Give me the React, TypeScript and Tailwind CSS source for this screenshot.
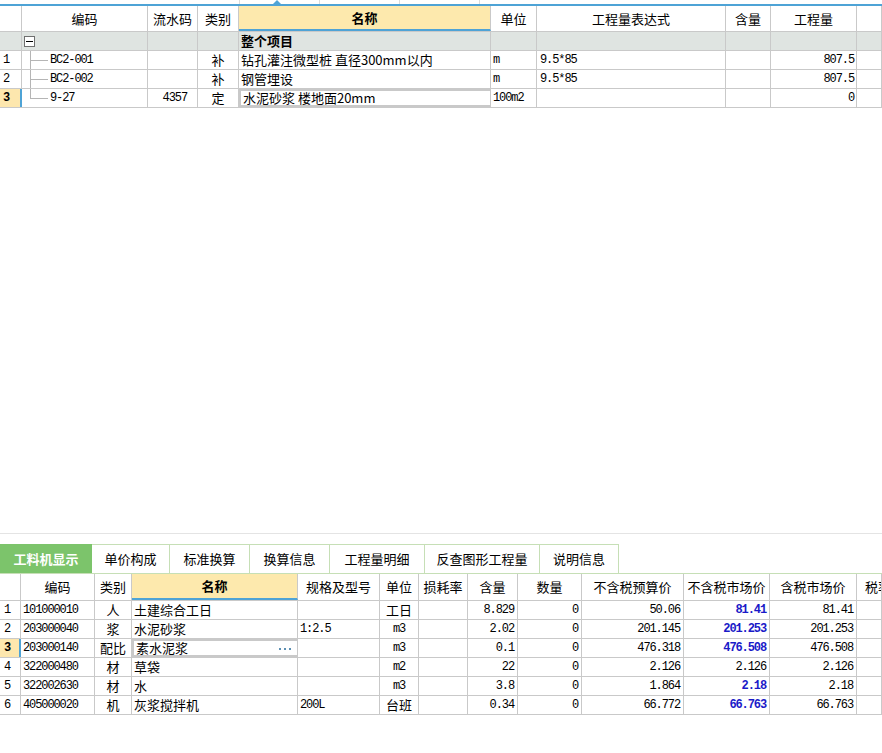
import React from 'react'

const cjk = "font-['Noto_Sans_CJK_SC','Noto_Sans',sans-serif]"
const mono = "font-['Liberation_Mono','DejaVu_Sans_Mono',monospace] text-[12px] tracking-[-1.1px]"

const topCols = [22, 126, 50, 41, 252, 46, 189, 45, 86, 25]
const topHeads = ['', '编码', '流水码', '类别', '名称', '单位', '工程量表达式', '含量', '工程量', '']

const topRows = [
    { n: '1', code: 'BC2-001', flow: '', kind: '补', name: '钻孔灌注微型桩 直径300mm以内', unit: 'm', expr: '9.5*85', qty: '807.5' },
    { n: '2', code: 'BC2-002', flow: '', kind: '补', name: '钢管埋设', unit: 'm', expr: '9.5*85', qty: '807.5' },
    { n: '3', code: '9-27', flow: '4357', kind: '定', name: '水泥砂浆 楼地面20mm', unit: '100m2', expr: '', qty: '0' },
]

const botCols = [21, 74, 37, 166, 82, 39, 49, 50, 64, 102, 86, 87, 25]
const botHeads = ['', '编码', '类别', '名称', '规格及型号', '单位', '损耗率', '含量', '数量', '不含税预算价', '不含税市场价', '含税市场价', '税率']

const botRows = [
    { code: '101000010', kind: '人', name: '土建综合工日', spec: '', unit: '工日', amt: '8.829', num: '0', p1: '50.06', p2: '81.41', blue: true, p3: '81.41' },
    { code: '203000040', kind: '浆', name: '水泥砂浆', spec: '1:2.5', unit: 'm3', amt: '2.02', num: '0', p1: '201.145', p2: '201.253', blue: true, p3: '201.253' },
    { code: '203000140', kind: '配比', name: '素水泥浆', spec: '', unit: 'm3', amt: '0.1', num: '0', p1: '476.318', p2: '476.508', blue: true, p3: '476.508' },
    { code: '322000480', kind: '材', name: '草袋', spec: '', unit: 'm2', amt: '22', num: '0', p1: '2.126', p2: '2.126', blue: false, p3: '2.126' },
    { code: '322002630', kind: '材', name: '水', spec: '', unit: 'm3', amt: '3.8', num: '0', p1: '1.864', p2: '2.18', blue: true, p3: '2.18' },
    { code: '405000020', kind: '机', name: '灰浆搅拌机', spec: '200L', unit: '台班', amt: '0.34', num: '0', p1: '66.772', p2: '66.763', blue: true, p3: '66.763' },
]

const tabs = ['工料机显示', '单价构成', '标准换算', '换算信息', '工程量明细', '反查图形工程量', '说明信息']
const tabW = [92, 78, 80, 80, 95, 115, 79]

const Cell: React.FC<{ w: number; className?: string; children?: React.ReactNode }> = ({ w, className, children }) => (
    <div style={{ width: w }} className={`shrink-0 h-full border-r border-[#c9c9c9] flex items-center overflow-hidden whitespace-nowrap ${className ?? ''}`}>
        {children}
    </div>
)

const TreeLines: React.FC<{ last: boolean }> = ({ last }) => (
    <div className="relative w-[28px] h-full shrink-0">
        <div className={`absolute left-[8px] top-0 w-px bg-[#b5b5b5] ${last ? 'h-1/2' : 'h-full'}`} />
        <div className="absolute left-[8px] top-1/2 w-[18px] h-px bg-[#b5b5b5]" />
    </div>
)

export default function App() {
    return <div className={`w-[882px] h-[753px] bg-white text-black text-[12px] overflow-hidden flex flex-col ${cjk}`}>

        {/* top strip */}
        <div className="relative h-[4px] flex shrink-0">
            <div className="w-[240px] h-full border-r border-[#dcdcdc]" />
            <div className="w-[80px] h-full border-r border-[#dcdcdc]" />
            <div className="w-[80px] h-full border-r border-[#dcdcdc]" />
            <div className="w-[80px] h-full border-r border-[#dcdcdc]" />
            <div className="absolute left-[273px] top-0 w-0 h-0 border-l-[4px] border-r-[4px] border-b-[4px] border-l-transparent border-r-transparent border-b-[#4ea3d6]" />
        </div>
        <div className="h-[2px] bg-[#4ea3d6] shrink-0" />

        {/* top table */}
        <div className="h-[528px] shrink-0 border-b border-[#e4e4e4]">
            <div className="flex h-[26px] border-b border-[#c9c9c9] text-[13px]">
                {topHeads.map((h, i) => (
                    <Cell key={i} w={topCols[i]} className={`justify-center ${i === 4 ? 'bg-[#fde9ad] font-bold border-b-2 border-b-[#4ea3d6]' : ''}`}>{h}</Cell>
                ))}
            </div>

            <div className="flex h-[19px] border-b border-[#c9c9c9] bg-[#dfe4e1]">
                <Cell w={topCols[0]} />
                <Cell w={topCols[1]}>
                    <div className="ml-[2px] w-[11px] h-[11px] border border-[#6f6f6f] bg-white flex items-center justify-center">
                        <div className="w-[7px] h-px bg-black" />
                    </div>
                </Cell>
                <Cell w={topCols[2]} />
                <Cell w={topCols[3]} />
                <Cell w={topCols[4]} className="font-bold pl-[2px] text-[13px]">整个项目</Cell>
                <Cell w={topCols[5]} />
                <Cell w={topCols[6]} />
                <Cell w={topCols[7]} />
                <Cell w={topCols[8]} />
                <Cell w={topCols[9]} />
            </div>

            {topRows.map((r, i) => {
                const sel = i === 2
                return <div key={i} className="flex h-[19px] border-b border-[#c9c9c9]">
                    <Cell w={topCols[0]} className={`pl-[3px] ${mono} ${sel ? 'bg-[#fde7ae] font-bold border-r-2 border-r-[#4ea3d6]' : ''}`}>{r.n}</Cell>
                    <Cell w={topCols[1]} className={mono}>
                        <TreeLines last={i === 2} />
                        <span>{r.code}</span>
                    </Cell>
                    <Cell w={topCols[2]} className={`justify-end pr-[10px] ${mono}`}>{r.flow}</Cell>
                    <Cell w={topCols[3]} className="justify-center text-[13px]">{r.kind}</Cell>
                    <Cell w={topCols[4]} className={`pl-[2px] text-[13px] ${sel ? 'border-2 border-[#7d7d7d]' : ''}`}>{r.name}</Cell>
                    <Cell w={topCols[5]} className={`pl-[2px] ${mono}`}>{r.unit}</Cell>
                    <Cell w={topCols[6]} className={`pl-[3px] ${mono}`}>{r.expr}</Cell>
                    <Cell w={topCols[7]} />
                    <Cell w={topCols[8]} className={`justify-end pr-[2px] ${mono}`}>{r.qty}</Cell>
                    <Cell w={topCols[9]} />
                </div>
            })}
        </div>

        <div className="h-[10px] shrink-0" />

        {/* tabs */}
        <div className="flex h-[30px] shrink-0 border-b border-[#c6dfb6]">
            {tabs.map((t, i) => (
                <div key={i} style={{ width: tabW[i] }}
                    className={`shrink-0 flex items-center justify-center text-[13px] ${i === 0 ? 'bg-[#7cc46b] text-white font-bold' : 'bg-white border-t border-r border-[#c6dfb6]'}`}>
                    {t}
                </div>
            ))}
        </div>

        {/* bottom table */}
        <div className="flex h-[27px] shrink-0 border-b border-[#c9c9c9] text-[13px]">
            {botHeads.map((h, i) => (
                <Cell key={i} w={botCols[i]} className={`${i === 12 ? 'pl-[8px]' : 'justify-center'} ${i === 3 ? 'bg-[#fde9ad] font-bold border-b-2 border-b-[#4ea3d6]' : ''}`}>{h}</Cell>
            ))}
        </div>

        {botRows.map((r, i) => {
            const sel = i === 2
            return <div key={i} className="flex h-[19px] shrink-0 border-b border-[#c9c9c9]">
                <Cell w={botCols[0]} className={`pl-[4px] ${mono} ${sel ? 'bg-[#fde7ae] font-bold border-r-2 border-r-[#4ea3d6]' : ''}`}>{i + 1}</Cell>
                <Cell w={botCols[1]} className={`pl-[2px] ${mono}`}>{r.code}</Cell>
                <Cell w={botCols[2]} className="justify-center text-[13px]">{r.kind}</Cell>
                <Cell w={botCols[3]} className={`pl-[2px] text-[13px] justify-between ${sel ? 'border-2 border-[#5aa8d2]' : ''}`}>
                    <span>{r.name}</span>
                    {sel && <svg width="12" height="4" viewBox="0 0 12 4" className="mr-[6px] mt-[1px]">
                        <rect x="0" y="1" width="2" height="2" fill="#5b8fb3" />
                        <rect x="5" y="1" width="2" height="2" fill="#5b8fb3" />
                        <rect x="10" y="1" width="2" height="2" fill="#5b8fb3" />
                    </svg>}
                </Cell>
                <Cell w={botCols[4]} className={`pl-[2px] ${mono}`}>{r.spec}</Cell>
                <Cell w={botCols[5]} className={`justify-center ${/^[a-z0-9]+$/.test(r.unit) ? mono : 'text-[13px]'}`}>{r.unit}</Cell>
                <Cell w={botCols[6]} />
                <Cell w={botCols[7]} className={`justify-end pr-[3px] ${mono}`}>{r.amt}</Cell>
                <Cell w={botCols[8]} className={`justify-end pr-[3px] ${mono}`}>{r.num}</Cell>
                <Cell w={botCols[9]} className={`justify-end pr-[3px] ${mono}`}>{r.p1}</Cell>
                <Cell w={botCols[10]} className={`justify-end pr-[3px] ${mono} ${r.blue ? 'text-[#1a1ac8] font-bold' : ''}`}>{r.p2}</Cell>
                <Cell w={botCols[11]} className={`justify-end pr-[3px] ${mono}`}>{r.p3}</Cell>
                <Cell w={botCols[12]} />
            </div>
        })}

        <div className="flex-1" />
    </div>
}
